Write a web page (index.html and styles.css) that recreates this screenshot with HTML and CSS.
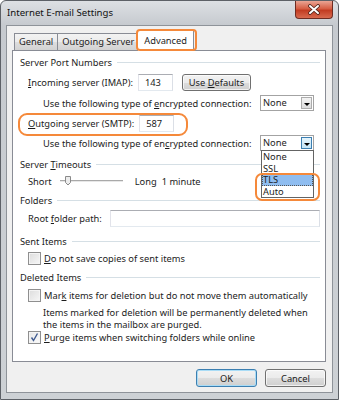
FILE: index.html
```html
<!DOCTYPE html>
<html lang="en">
<head>
  <meta charset="UTF-8">
  <title>Internet E-mail Settings</title>
  <link rel="stylesheet" href="styles.css">
</head>
<body>
  <div class="window">
    <div class="titlebar">
      <span class="title">Internet E-mail Settings</span>
      <div class="close-btn">
        <svg width="14" height="11" viewBox="0 0 14 11">
          <path d="M3 2 L11 9 M11 2 L3 9" stroke="#4a2119" stroke-width="3.6" stroke-linecap="round"/>
          <path d="M3 2 L11 9 M11 2 L3 9" stroke="#fff" stroke-width="2" stroke-linecap="round"/>
        </svg>
      </div>
    </div>

    <div class="client">
      <!-- Onglets -->
      <div class="tabs">
        <div class="tab">General</div>
        <div class="tab">Outgoing Server</div>
        <div class="tab active">Advanced</div>
      </div>

      <div class="panel">
        <!-- Server Port Numbers -->
        <div class="group">
          <div class="group-title"><span>Server Port Numbers</span></div>
          <div class="row tall">
            <span><u>I</u>ncoming server (IMAP):</span>
            <div class="textbox port">143</div>
            <button class="btn defaults">Use <u>D</u>efaults</button>
          </div>
          <div class="row sub">
            <span>Use the following type of <u>e</u>ncrypted connection:</span>
            <div class="combo">
              <span class="combo-text">None</span>
              <span class="combo-arrow"></span>
            </div>
          </div>
          <div class="row">
            <span><u>O</u>utgoing server (SMTP):</span>
            <div class="textbox port">587</div>
          </div>
          <div class="row sub">
            <span>Use the following type of en<u>c</u>rypted connection:</span>
            <div class="combo open">
              <span class="combo-text">None</span>
              <span class="combo-arrow"></span>
              <div class="combo-list">
                <div class="option">None</div>
                <div class="option">SSL</div>
                <div class="option selected">TLS</div>
                <div class="option">Auto</div>
              </div>
            </div>
          </div>
        </div>

        <!-- Server Timeouts -->
        <div class="group">
          <div class="group-title"><span>Server <u>T</u>imeouts</span></div>
          <div class="row compact">
            <span>Short</span>
            <svg class="slider" width="64" height="12" viewBox="0 0 64 12">
              <rect x="0" y="5" width="63" height="1" fill="#a9a9a9"/>
              <rect x="0" y="6" width="63" height="1" fill="#e7e7e7"/>
              <path d="M5.5 1.5 H10.5 V7.5 L8 10 L5.5 7.5 Z" fill="#ececec" stroke="#8a8a8a"/>
            </svg>
            <span class="long">Long</span>
            <span class="minute">1 minute</span>
          </div>
        </div>

        <!-- Folders -->
        <div class="group">
          <div class="group-title"><span>Folders</span></div>
          <div class="row mid">
            <span>Root <u>f</u>older path:</span>
            <div class="textbox path"></div>
          </div>
        </div>

        <!-- Sent Items -->
        <div class="group sent">
          <div class="group-title"><span>Sent Items</span></div>
          <div class="row compact">
            <span class="checkbox"></span>
            <span><u>D</u>o not save copies of sent items</span>
          </div>
        </div>

        <!-- Deleted Items -->
        <div class="group">
          <div class="group-title"><span>Deleted Items</span></div>
          <div class="row mid">
            <span class="checkbox"></span>
            <span>Mar<u>k</u> items for deletion but do not move them automatically</span>
          </div>
          <div class="note">
            Items marked for deletion will be permanently deleted when<br>
            the items in the mailbox are purged.
          </div>
          <div class="row tight">
            <span class="checkbox checked">
              <svg width="11" height="11" viewBox="0 0 11 11">
                <path d="M2.5 5.5 L4.5 8.5 L8.5 1.5" fill="none" stroke="#3f5a8f" stroke-width="1.4"/>
              </svg>
            </span>
            <span><u>P</u>urge items when switching folders while online</span>
          </div>
        </div>
      </div>

      <div class="actions">
        <button class="btn default">OK</button>
        <button class="btn">Cancel</button>
      </div>
    </div>

    <!-- Annotations orange par-dessus la capture -->
    <div class="mark mark-tab"></div>
    <div class="mark mark-smtp"></div>
    <div class="mark mark-tls"></div>
  </div>
</body>
</html>
```

FILE: styles.css
```css
/* Styles généraux */
* {
  box-sizing: border-box;
}
body {
  margin: 0;
  font-family: "Noto Sans", sans-serif;
  font-size: 9.3px;
  color: #1c1c1c;
  background-color: #fff;
  white-space: nowrap;
}
u {
  text-decoration: underline;
  text-underline-offset: 1px;
}

/* Fenêtre */
.window {
  position: relative;
  width: 339px;
  height: 400px;
  border: 1px solid #5d6167;
  border-radius: 6px 6px 0 0;
  background: linear-gradient(#dde0e4, #c6cacf 24px, #cdd1d5);
  padding: 0 5px 6px;
  display: flex;
  flex-direction: column;
}
.titlebar {
  height: 24px;
  display: flex;
  align-items: flex-start;
}
.title {
  margin: 5px 0 0 1px;
  font-size: 9.6px;
  color: #111;
}
.close-btn {
  margin-left: auto;
  width: 38px;
  height: 18px;
  border: 1px solid #6e2c22;
  border-top: none;
  border-radius: 0 0 4px 4px;
  background: linear-gradient(#eaa594, #d65e44 45%, #c23c22 55%, #d86a4f);
  display: flex;
  align-items: center;
  justify-content: center;
}
.client {
  flex: 1;
  background-color: #f0f0f0;
  border: 1px solid #8e9399;
  padding: 4px 6px 0 5px;
  display: flex;
  flex-direction: column;
}

/* Onglets */
.tabs {
  display: flex;
  align-items: flex-end;
  height: 21px;
  margin-left: 2px;
  margin-bottom: -1px;
  position: relative;
  z-index: 1;
}
.tab {
  height: 17px;
  margin-bottom: 1px;
  margin-right: -1px;
  padding: 0 4px;
  border: 1px solid #898c95;
  border-bottom: none;
  background: linear-gradient(#f3f3f3, #ebebeb 50%, #dedede 50%, #d2d2d2);
  line-height: 16px;
}
.tab.active {
  height: 21px;
  margin-bottom: 0;
  margin-left: -1px;
  padding: 0 6px;
  background: #fff;
  line-height: 19px;
}

/* Panneau */
.panel {
  height: 312px;
  background-color: #fff;
  border: 1px solid #898c95;
  padding: 2px 5px 0 7px;
}
.group-title {
  display: flex;
  align-items: center;
  height: 18px;
}
.group-title::after {
  content: "";
  flex: 1;
  height: 1px;
  margin-left: 5px;
  background-color: #d5dfe5;
}
.group + .group {
  margin-top: 2px;
}
.group.sent {
  margin-top: 5px;
}
.row {
  display: flex;
  align-items: center;
  height: 20px;
  padding-left: 8px;
}
.row.tall {
  height: 22px;
}
.row.mid {
  height: 18px;
}
.row.compact {
  height: 16px;
}
.row.tight {
  height: 12px;
}
.row.sub {
  padding-left: 23px;
}

/* Champs */
.textbox {
  height: 17px;
  border: 1px solid;
  border-color: #abadb3 #dbdfe6 #e3e9ef #e2e3ea;
  background-color: #fff;
  padding-left: 6px;
  line-height: 15px;
}
.textbox.port {
  width: 35px;
  margin-left: 5px;
}
.textbox.path {
  flex: 1;
  margin-left: 8px;
}
.btn {
  font-family: inherit;
  font-size: 9.3px;
  color: #1c1c1c;
  height: 17px;
  padding: 0;
  border: 1px solid #707070;
  border-radius: 3px;
  background: linear-gradient(#f2f2f2, #ebebeb 50%, #dddddd 50%, #cfcfcf);
  box-shadow: inset 0 0 0 1px rgba(255, 255, 255, 0.7);
}
.btn.defaults {
  width: 69px;
  margin-left: 9px;
}

/* Liste déroulante */
.combo {
  position: relative;
  display: flex;
  width: 54px;
  height: 16px;
  margin-left: auto;
  margin-right: 6px;
  border: 1px solid #a3a3a3;
  background-color: #fff;
}
.combo-text {
  flex: 1;
  padding-left: 2px;
  line-height: 14px;
}
.combo-arrow {
  position: relative;
  width: 11px;
  margin: 1px;
  border: 1px solid #acacac;
  background: linear-gradient(#f4f4f4, #dcdcdc);
}
.combo-arrow::after {
  content: "";
  position: absolute;
  left: 2px;
  top: 5px;
  border-left: 3px solid transparent;
  border-right: 3px solid transparent;
  border-top: 3px solid #000;
}
.combo.open .combo-arrow {
  border-color: #3c7fb1;
  background: linear-gradient(#e5f4fc, #c4e5f6);
}
.combo-list {
  position: absolute;
  left: 0;
  top: 14px;
  width: 53px;
  border: 1px solid #646464;
  background-color: #fff;
  z-index: 2;
}
.option {
  height: 11.5px;
  line-height: 11.5px;
  padding-left: 1px;
}
.option.selected {
  background-color: #8fbdf0;
  outline: 1px dotted #555;
  outline-offset: -1px;
}

/* Délais */
.slider {
  margin-left: 8px;
}
.long {
  margin-left: 11px;
}
.minute {
  margin-left: 5px;
}

/* Cases à cocher */
.checkbox {
  width: 13px;
  height: 13px;
  margin-right: 3px;
  border: 1px solid #8f8f8f;
  background: linear-gradient(135deg, #dcdcdc, #f7f7f7);
  box-shadow: inset 0 0 0 1px #f4f4f4;
  display: flex;
  align-items: center;
  justify-content: center;
  flex-shrink: 0;
}
.checkbox.checked {
  background: linear-gradient(135deg, #e8e8e8, #fafafa);
}
.note {
  margin-top: 3px;
  padding-left: 23px;
  line-height: 12px;
}

/* Boutons du bas */
.actions {
  display: flex;
  justify-content: flex-end;
  gap: 8px;
  margin-top: 7px;
}
.actions .btn {
  width: 61px;
  height: 18px;
}
.actions .btn.default {
  border-color: #3c7fb1;
  box-shadow: inset 0 0 0 1px #a9dcf6;
}

/* Annotations */
.mark {
  position: absolute;
  border: 2px solid #f5893a;
  pointer-events: none;
  z-index: 5;
}
.mark-tab {
  left: 135px;
  top: 28px;
  width: 61px;
  height: 22px;
  border-radius: 4px;
}
.mark-smtp {
  left: 17px;
  top: 112px;
  width: 170px;
  height: 23px;
  border-radius: 9px;
}
.mark-tls {
  left: 254px;
  top: 172px;
  width: 65px;
  height: 28px;
  border-radius: 7px;
}
```
